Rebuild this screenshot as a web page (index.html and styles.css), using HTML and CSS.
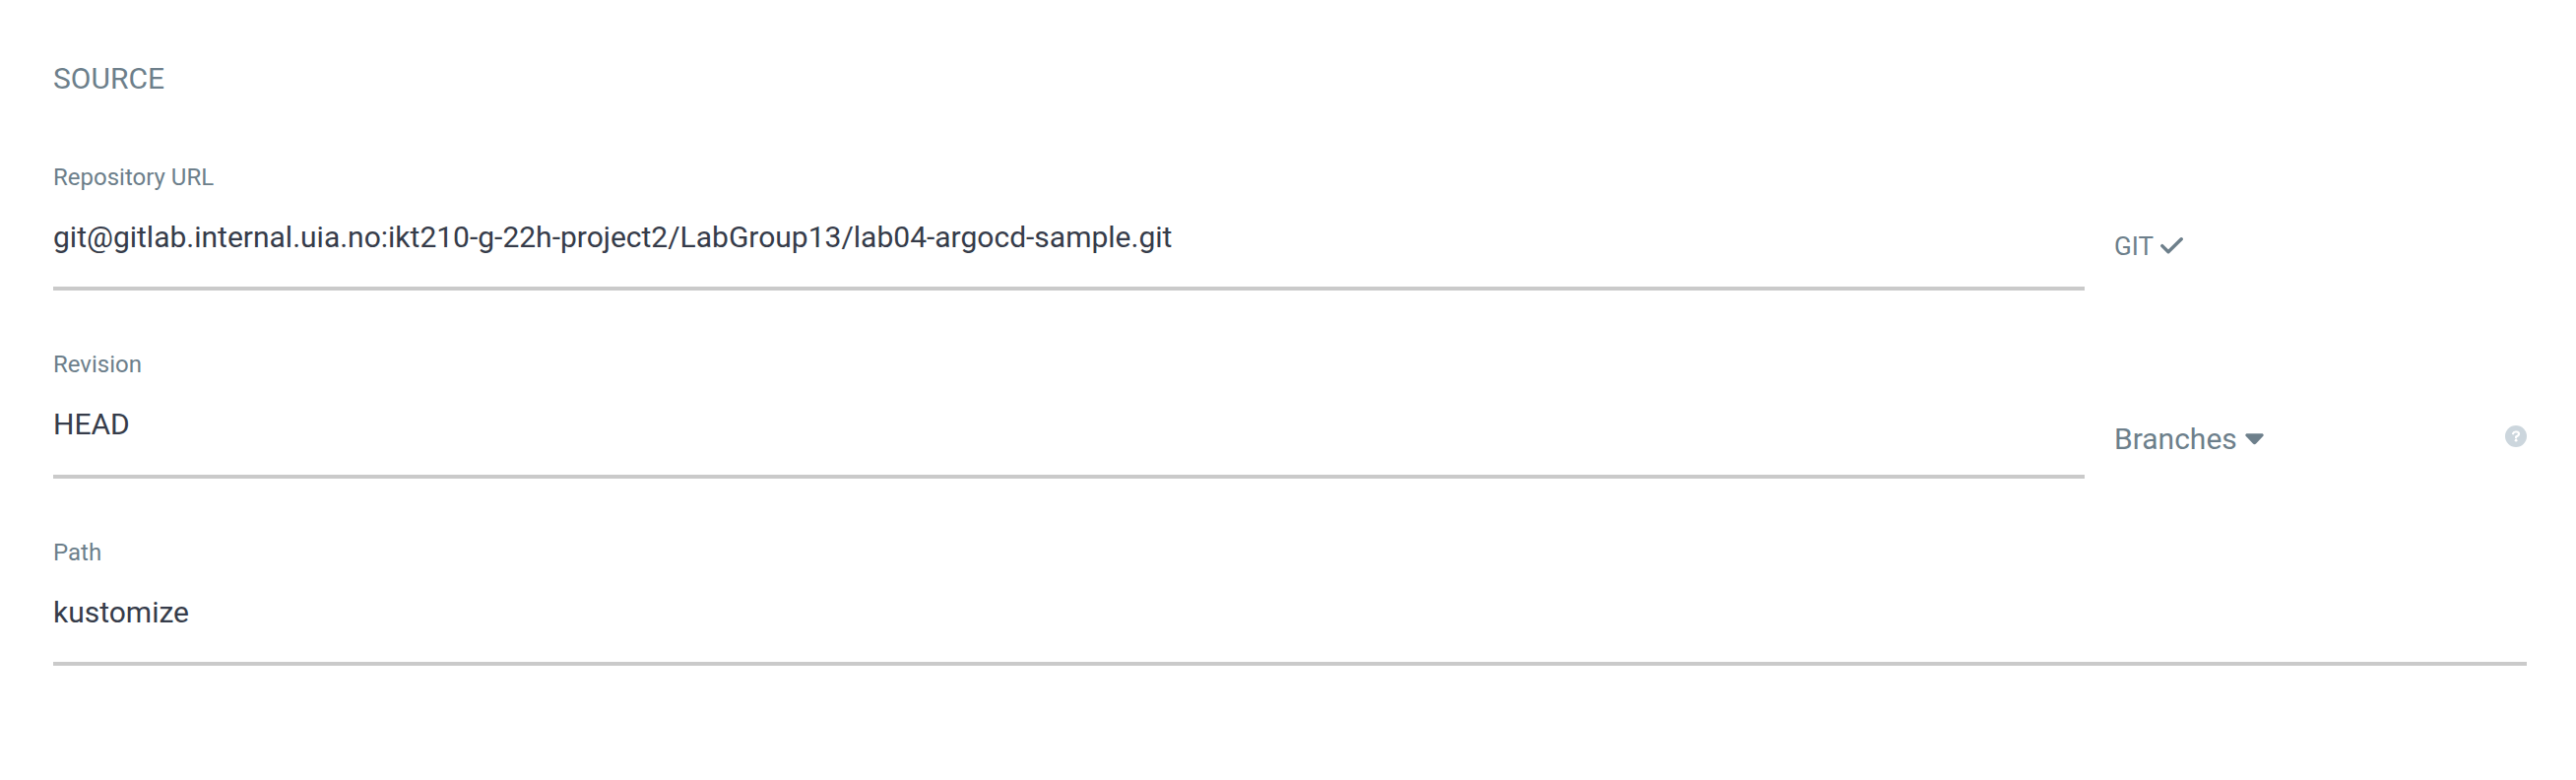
FILE: index.html
```html
<!DOCTYPE html>
<html lang="en">
<head>
<meta charset="utf-8">
<title>Source</title>
<link rel="stylesheet" href="styles.css">
</head>
<body>
<main class="panel">
  <h1 class="title">SOURCE</h1>
  <div class="row">
    <div class="field">
      <div class="label">Repository URL</div>
      <div class="value">git@gitlab.internal.uia.no:ikt210-g-22h-project2/LabGroup13/lab04-argocd-sample.git</div>
    </div>
    <div class="side side-git">
      <span>GIT</span>
      <svg class="check" viewBox="0 0 23 17"><path d="M1.8 8.6 L8 14.8 L21.2 1.8"/></svg>
    </div>
  </div>
  <div class="row row-ref">
    <div class="field">
      <div class="label">Revision</div>
      <div class="value">HEAD</div>
    </div>
    <div class="side side-ref">
      <span>Branches</span>
      <svg class="caret" viewBox="0 0 20 12"><path d="M1.5 0h17q2 1 .8 2.5l-7.7 8.3q-1.6 1.6-3.2 0L.7 2.5Q-.5 1 1.5 0z"/></svg>
      <svg class="help" viewBox="0 0 22 22"><circle cx="11" cy="11" r="11"/><path d="M8 8.3Q8.6 6.5 10.4 6.5h1.4q2.2.1 2.2 2.2 0 1.1-1.2 1.8l-1.7 1v1"/><circle class="dot" cx="11.1" cy="15.2" r="1.4"/></svg>
    </div>
  </div>
  <div class="row">
    <div class="field">
      <div class="label">Path</div>
      <div class="value">kustomize</div>
    </div>
  </div>
</main>
</body>
</html>
```
FILE: styles.css
```css
body {
  margin: 0;
  background: #fff;
  font-family: Roboto, sans-serif;
}
.panel {
  padding: 60px 50px 0 54px;
}
.title {
  margin: 0 0 66px;
  font-size: 30px;
  line-height: 40px;
  font-weight: 400;
  color: #6d7f8b;
}
.row {
  display: flex;
  height: 129px;
  margin-bottom: 61px;
}
.row-ref { height: 130px; }
.field {
  flex: 1;
  border-bottom: 4px solid #cacaca;
}
.label {
  font-size: 24px;
  line-height: 28px;
  color: #6d7f8b;
}
.value {
  margin-top: 27px;
  font-size: 30px;
  line-height: 40px;
  color: #363c4a;
}
.side {
  display: flex;
  box-sizing: border-box;
  width: 419px;
  margin-left: 30px;
  color: #6d7f8b;
}
.side-git {
  height: 102px;
  padding-top: 66px;
  align-items: center;
  font-size: 26px;
  line-height: 36px;
}
.side-ref {
  height: 110px;
  padding-top: 70px;
  align-items: center;
  font-size: 30px;
  line-height: 40px;
}
.check {
  width: 23px;
  height: 17px;
  margin: 0 0 2px 7px;
  fill: none;
  stroke: #6d7f8b;
  stroke-width: 3.4;
  stroke-linecap: round;
  stroke-linejoin: round;
}
.caret { width: 19px; height: 12px; margin-left: 8px; fill: #6d7f8b; }
.help { width: 22px; height: 22px; margin: 0 0 6px auto; fill: #ccd6dd; }
.help path { fill: none; stroke: #fff; stroke-width: 2.2; stroke-linecap: round; stroke-linejoin: round; }
.help .dot { fill: #fff; }
```
